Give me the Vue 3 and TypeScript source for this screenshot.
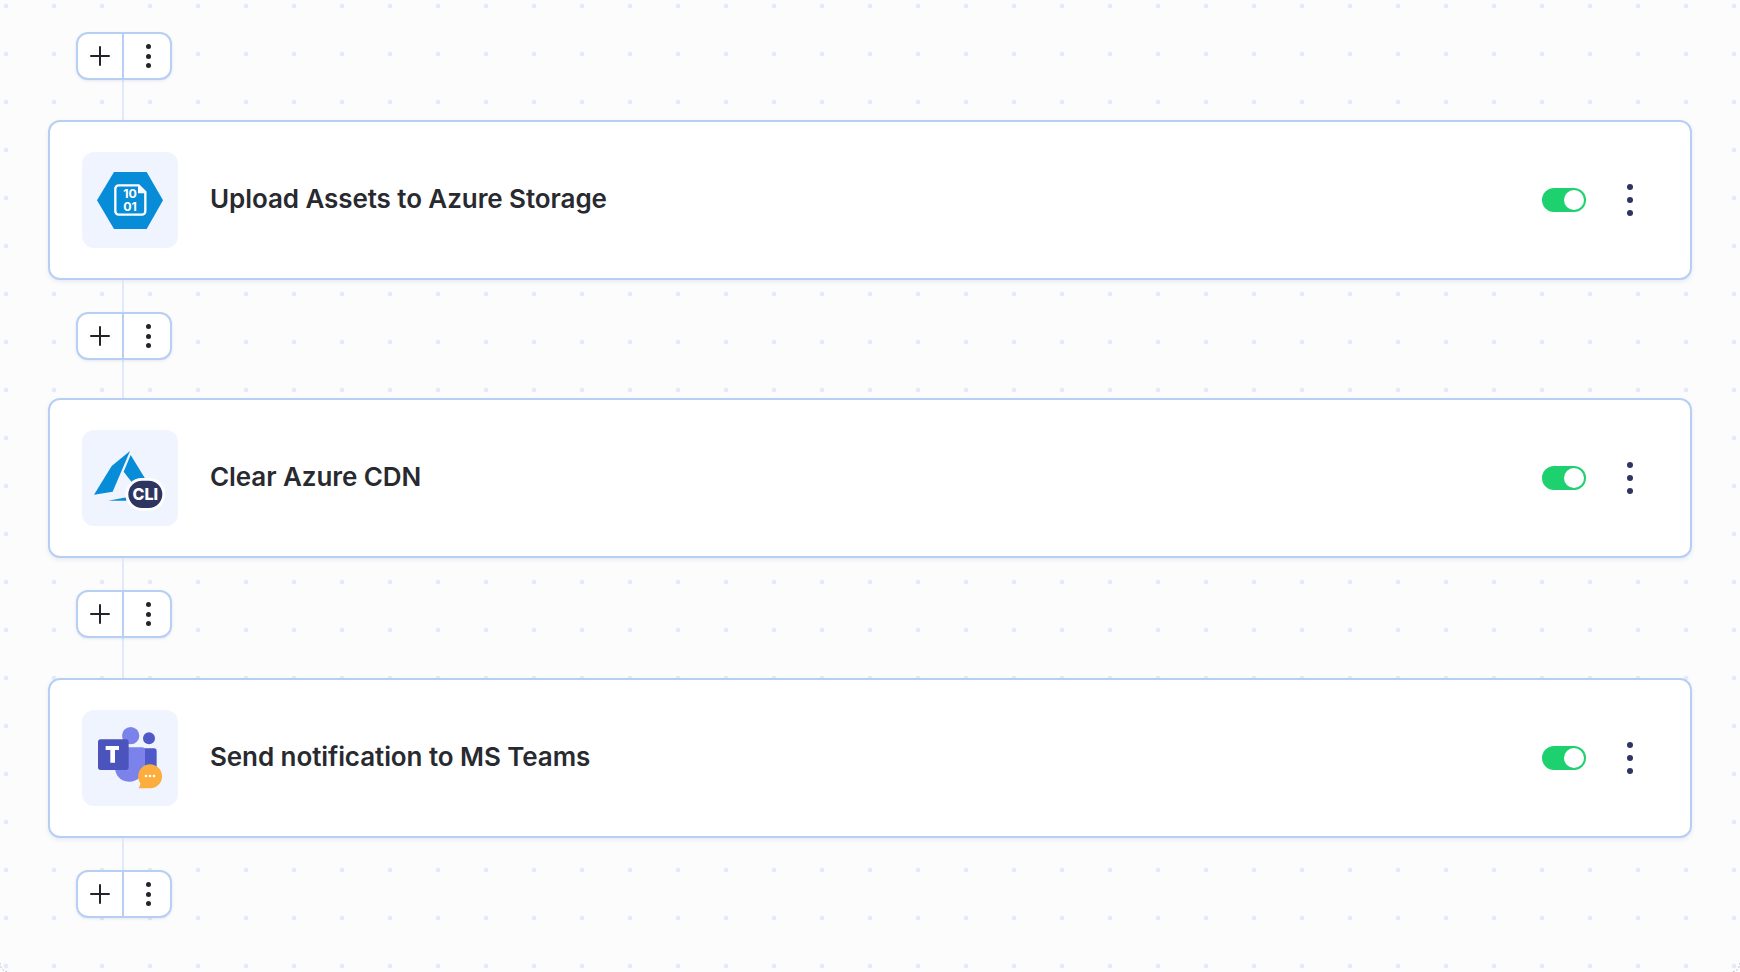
<script setup lang="ts">
const steps = [
  { id: 'blob', title: 'Upload Assets to Azure Storage', rowHeight: 118 },
  { id: 'cli', title: 'Clear Azure CDN', rowHeight: 120 },
  { id: 'teams', title: 'Send notification to MS Teams', rowHeight: 80 },
]
</script>

<template>
  <div class="canvas">
    <div class="flow">
      <div class="add-row first">
        <div class="add-bar">
          <button type="button" class="add-btn">
            <svg width="20" height="20" viewBox="0 0 20 20"><path d="M10 1v18M1 10h18" stroke="#22242a" stroke-width="2" stroke-linecap="round" /></svg>
          </button>
          <button type="button" class="more-btn"><i /><i /><i /></button>
        </div>
      </div>
      <template v-for="(step, i) in steps" :key="step.id">
        <div class="card">
          <div class="logo">
            <svg v-if="step.id === 'blob'" width="96" height="96" viewBox="0 0 288 288">
              <path d="M45 145 96 60h98l49 85-49 86H96z" fill="#078cd8" />
              <path d="M100 110a10 10 0 0 1 10-10h60l20 20v58a10 10 0 0 1-10 10h-70a10 10 0 0 1-10-10z" fill="none" stroke="#fff" stroke-width="7" />
              <path d="M168 98v26h26z" fill="#fff" />
              <text x="144" y="139" class="bits">10</text>
              <text x="144" y="176" class="bits">01</text>
            </svg>
            <svg v-else-if="step.id === 'cli'" width="96" height="96" viewBox="0 0 288 288">
              <path d="M36 194 89 108 144 63 92 185z" fill="#078cd8" />
              <path d="M146 75 192 150 214 200H160V170L125 125z" fill="#078cd8" />
              <path d="M79 212 134 202V212z" fill="#078cd8" />
              <rect x="130" y="144" width="120" height="98" rx="49" fill="#fff" />
              <rect x="139" y="152" width="102" height="82" rx="41" fill="#2e3560" />
              <text x="190" y="210" class="cli">CLI</text>
            </svg>
            <svg v-else width="96" height="96" viewBox="0 0 288 288">
              <circle cx="146" cy="77" r="26" fill="#7b83eb" />
              <circle cx="201" cy="85" r="18" fill="#5059c9" />
              <path d="M175 115h41a8 8 0 0 1 8 8v48a24 24 0 0 1-24 24h-25z" fill="#5059c9" />
              <path d="M100 112h80a9 9 0 0 1 9 9v46a48 48 0 0 1-48 48c-26 0-42-20-42-44z" fill="#7b83eb" />
              <rect x="48" y="88" width="92" height="92" rx="8" fill="#4b53bc" />
              <path d="M71 108h40v12H99v38H85v-38H71z" fill="#fff" />
              <path d="M169 235c5-5 6-11 6-15a36 36 0 1 1 29 15z" fill="#fbad3d" />
              <circle cx="192" cy="198" r="4" fill="#fff" /><circle cx="204" cy="198" r="4" fill="#fff" /><circle cx="216" cy="198" r="4" fill="#fff" />
            </svg>
          </div>
          <div class="title">{{ step.title }}</div>
          <div class="toggle"><span class="knob" /></div>
          <div class="menu"><i /><i /><i /></div>
        </div>
        <div class="add-row" :class="{ last: i === steps.length - 1 }" :style="{ height: step.rowHeight + 'px' }">
          <div class="add-bar">
            <button type="button" class="add-btn">
              <svg width="20" height="20" viewBox="0 0 20 20"><path d="M10 1v18M1 10h18" stroke="#22242a" stroke-width="2" stroke-linecap="round" /></svg>
            </button>
            <button type="button" class="more-btn"><i /><i /><i /></button>
          </div>
        </div>
      </template>
    </div>
    <svg class="corner left" width="10" height="10" viewBox="0 0 10 10"><path d="M0 1a9 9 0 0 0 9 9" fill="none" stroke="#a9a9ad" stroke-dasharray="1.500 2" /></svg>
    <svg class="corner right" width="10" height="10" viewBox="0 0 10 10"><path d="M10 1a9 9 0 0 1-9 9" fill="none" stroke="#a9a9ad" stroke-dasharray="1.500 2" /></svg>
  </div>
</template>

<style>
html, body { margin: 0; background: #fcfcfd; }
</style>

<style scoped>
.canvas {
  position: relative;
  width: 1740px;
  height: 972px;
  overflow: hidden;
  box-sizing: border-box;
  padding: 32px 48px 0;
  background-color: #fcfcfd;
  background-image: radial-gradient(circle at 6px 6px, #e2ebfb 2px, transparent 2.800px);
  background-size: 48px 48px;
  font-family: Inter, "Liberation Sans", sans-serif;
}
.flow { display: flex; flex-direction: column; }
.add-row {
  padding-top: 32px;
  box-sizing: border-box;
  margin-left: 28px;
  flex: none;
  background: linear-gradient(#dfe9fa, #dfe9fa) 46px 0 / 2px 100% no-repeat;
}
.add-row.first { height: 88px; padding-top: 0; }
.add-row.last { background-size: 2px 34px; }
.add-bar {
  display: flex;
  width: 96px;
  height: 48px;
  box-sizing: border-box;
  border: 2px solid #b7cff2;
  border-radius: 12px;
  background: #fff;
  box-shadow: 0 1px 3px rgba(60, 90, 160, .12);
}
.add-btn, .more-btn {
  padding: 0;
  border: 0;
  background: none;
  display: flex;
  align-items: center;
  justify-content: center;
}
.add-btn { width: 46px; border-right: 2px solid #b7cff2; }
.more-btn { flex: 1; flex-direction: column; gap: 4.500px; padding-left: 2px; }
.more-btn i { width: 5px; height: 5px; border-radius: 50%; background: #22242a; }
.card {
  display: flex;
  align-items: center;
  width: 1644px;
  height: 160px;
  box-sizing: border-box;
  flex: none;
  padding: 0 57px 0 32px;
  border: 2px solid #b7cff2;
  border-radius: 12px;
  background: #fff;
  box-shadow: 0 2px 4px rgba(60, 90, 160, .1);
}
.logo {
  width: 96px;
  height: 96px;
  flex: none;
  border-radius: 12px;
  background: #eff4fe;
}
.logo svg { display: block; }
.bits { font: 700 37px Inter, sans-serif; fill: #fff; text-anchor: middle; }
.cli { font: 800 48px Inter, sans-serif; fill: #fff; text-anchor: middle; }
.title {
  flex: 1;
  margin-left: 32px;
  padding-bottom: 4px;
  font-size: 26px;
  font-weight: 600;
  letter-spacing: -0.08px;
  color: #282a30;
}
.toggle {
  width: 44px;
  height: 24px;
  box-sizing: border-box;
  padding: 2px;
  border-radius: 12px;
  background: #1ed16f;
  display: flex;
  justify-content: flex-end;
}
.knob { width: 20px; height: 20px; border-radius: 50%; background: #fff; }
.menu {
  margin-left: 41px;
  width: 6px;
  display: flex;
  flex-direction: column;
  gap: 7px;
}
.menu i { width: 6px; height: 6px; border-radius: 50%; background: #2e3560; }
.corner { position: absolute; bottom: 0; }
.corner.left { left: 0; }
.corner.right { right: 0; }
</style>
